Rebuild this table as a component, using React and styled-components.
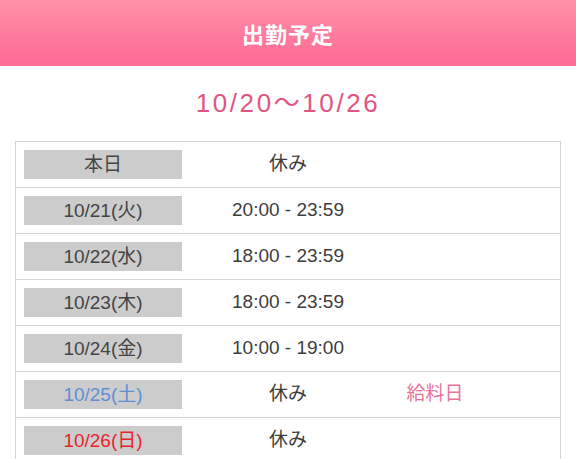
import React from "react"
import styled, { createGlobalStyle } from "styled-components"

const GlobalStyle = createGlobalStyle`
  body {
    margin: 0;
    background: #fff;
    font-family: "Liberation Sans", "Noto Sans CJK JP", sans-serif;
  }
`

const Page = styled.div`
  width: 576px;
  height: 459px;
  overflow: hidden;
  background: #fff;
`

const Header = styled.header`
  height: 66px;
  display: flex;
  align-items: center;
  justify-content: center;
  background: linear-gradient(to bottom, #fe93a5 0%, #fe7d9d 50%, #fe6995 100%);
  color: #fff;
  font-family: "Noto Sans CJK JP", sans-serif;
  font-weight: 700;
  font-size: 22px;
  letter-spacing: 1px;
`

const Range = styled.div`
  height: 75px;
  display: flex;
  align-items: center;
  justify-content: center;
  color: #e0567f;
  font-size: 26px;
  line-height: 1;
  letter-spacing: 2.6px;
  padding-bottom: 2px;
  box-sizing: border-box;
`

const Table = styled.div`
  margin: 0 15px;
  border: 1px solid #d4d4d4;
  border-bottom: none;
`

const Row = styled.div`
  display: grid;
  grid-template-columns: 158px 212px 82px 1fr;
  align-items: center;
  height: 45px;
  padding-left: 8px;
  border-bottom: 1px solid #d4d4d4;
`

const Label = styled.div`
  height: 29px;
  display: flex;
  align-items: center;
  justify-content: center;
  background: #cccccc;
  font-size: 19px;
  line-height: 1;
  color: ${(p) => p.$color || "#444"};
`

const Cell = styled.div`
  text-align: center;
  font-size: 19px;
  line-height: 1;
  padding-bottom: 2px;
  color: ${(p) => p.$color || "#3d3d3d"};
`

const rows = [
  { day: "本日", time: "休み" },
  { day: "10/21(火)", time: "20:00 - 23:59" },
  { day: "10/22(水)", time: "18:00 - 23:59" },
  { day: "10/23(木)", time: "18:00 - 23:59" },
  { day: "10/24(金)", time: "10:00 - 19:00" },
  { day: "10/25(土)", time: "休み", note: "給料日", color: "#5c8fd4" },
  { day: "10/26(日)", time: "休み", color: "#e8242c" },
]

const App = () => {
  return (
    <Page>
      <GlobalStyle />
      <Header>出勤予定</Header>
      <Range>10/20〜10/26</Range>
      <Table>
        {rows.map((r) => (
          <Row key={r.day}>
            <Label $color={r.color}>{r.day}</Label>
            <Cell>{r.time}</Cell>
            <Cell $color="#e8739a">{r.note}</Cell>
          </Row>
        ))}
      </Table>
    </Page>
  )
}

export default App
